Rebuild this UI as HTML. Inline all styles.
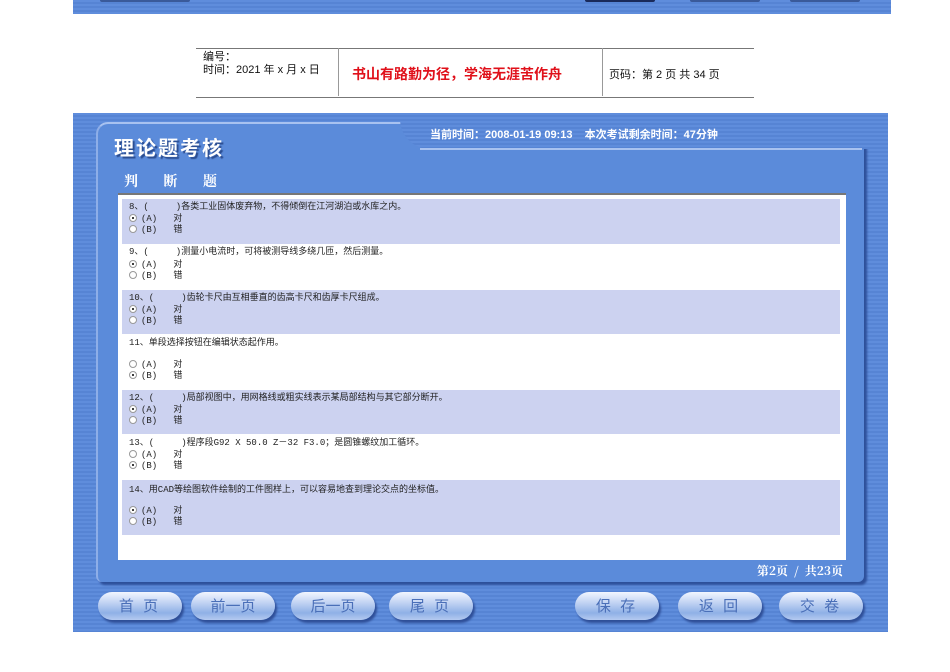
<!DOCTYPE html>
<html><head><meta charset="utf-8"><style>
body{margin:0;width:950px;height:672px;background:#fff;position:relative;overflow:hidden;font-family:"Liberation Sans","Noto Sans CJK SC",sans-serif}
.abs{position:absolute}
.stripe{background:#5a88d8;background-image:repeating-linear-gradient(180deg,#5f8ddc 0 2px,#5684d4 2px 4px)}
.row{position:absolute;left:122px;width:718px;font-family:"Liberation Mono","Noto Sans CJK SC",sans-serif;font-size:9px;color:#222}
.row div{position:absolute;left:7px;white-space:pre;line-height:11px}
.lav{background:#ccd2f0}
.r{display:inline-block;width:6px;height:6px;border:1px solid #999;border-radius:50%;background:#fff;vertical-align:-1px;position:relative;margin-right:4px}
.r.on:after{content:"";position:absolute;left:2px;top:2px;width:2px;height:2px;background:#000;border-radius:50%}
.btn{position:absolute;top:592px;height:28px;width:84px;border-radius:14px;background:linear-gradient(180deg,#f2f6ff 0%,#c6d6f4 35%,#8fb0e6 75%,#b4caf0 100%);box-shadow:2px 3px 2px #2f4f98;color:#4a6fb8;font-size:15px;text-align:center;line-height:28px;letter-spacing:3px;font-family:"Noto Sans CJK SC",sans-serif}
</style></head><body>
<div class="abs stripe" style="left:73px;top:0;width:818px;height:14px"></div>
<div class="abs" style="left:100px;top:0;width:90px;height:2px;background:#3a5a9a;border-radius:0 0 10px 10px"></div>
<div class="abs" style="left:585px;top:0;width:70px;height:2px;background:#1a2a5a;border-radius:0 0 10px 10px"></div>
<div class="abs" style="left:690px;top:0;width:70px;height:2px;background:#3a5a9a;border-radius:0 0 10px 10px"></div>
<div class="abs" style="left:790px;top:0;width:70px;height:2px;background:#3a5a9a;border-radius:0 0 10px 10px"></div>

<div class="abs" style="left:196px;top:48px;width:558px;height:48px;border-top:1px solid #777;border-bottom:1px solid #777"></div>
<div class="abs" style="left:338px;top:48px;width:1px;height:48px;background:#999"></div>
<div class="abs" style="left:602px;top:48px;width:1px;height:48px;background:#999"></div>
<div class="abs" style="left:203px;top:51px;font-size:11px;line-height:13px;color:#111">编号：<br>时间：2021 年 x 月 x 日</div>
<div class="abs" style="left:352px;top:64px;font-size:14px;font-weight:bold;color:#e0101a;font-family:'Noto Sans CJK SC',sans-serif">书山有路勤为径，学海无涯苦作舟</div>
<div class="abs" style="left:609px;top:66px;font-size:11px;color:#111">页码：第 2 页 共 34 页</div>

<div class="abs stripe" style="left:73px;top:113px;width:815px;height:519px"></div>
<div class="abs" style="left:96px;top:122px;width:766px;height:458px;background:#5b8bda;border-radius:12px 6px 6px 6px;box-shadow:3px 3px 2px #2d4f9a;border-top:2px solid #a8c2f0;border-left:2px solid #8eaee8"></div>
<div class="abs stripe" style="left:400px;top:113px;width:470px;height:36px;border-radius:0 0 0 30px"></div>
<div class="abs" style="left:420px;top:148px;width:442px;height:2px;background:#a8c2f0"></div>
<div class="abs" style="left:114px;top:132px;font-size:20px;font-weight:bold;color:#fff;letter-spacing:2px;text-shadow:2px 2px 1px #2a4c90;font-family:'Noto Sans CJK SC',sans-serif">理论题考核</div>
<div class="abs" style="left:124px;top:171px;font-size:14px;font-weight:bold;color:#fff;word-spacing:22px;font-family:'Noto Serif CJK SC',serif">判 断 题</div>
<div class="abs" style="left:430px;top:126px;font-size:11px;font-weight:bold;color:#fff">当前时间：2008-01-19 09:13 &nbsp;&nbsp;&nbsp;本次考试剩余时间：47分钟</div>

<div class="abs" style="left:118px;top:193px;width:728px;height:365px;background:#fff;border-top:2px solid #777"></div>

<div class="row lav" style="top:199px;height:45px"><div style="top:3px">8、(     )各类工业固体废弃物，不得倾倒在江河湖泊或水库之内。</div><div style="top:15px"><span class="r on"></span>(A)   对</div><div style="top:26px"><span class="r"></span>(B)   错</div></div>
<div class="row" style="top:245px;height:44px"><div style="top:2px">9、(     )测量小电流时，可将被测导线多绕几匝，然后测量。</div><div style="top:15px"><span class="r on"></span>(A)   对</div><div style="top:26px"><span class="r"></span>(B)   错</div></div>
<div class="row lav" style="top:290px;height:44px"><div style="top:3px">10、(     )齿轮卡尺由互相垂直的齿高卡尺和齿厚卡尺组成。</div><div style="top:15px"><span class="r on"></span>(A)   对</div><div style="top:26px"><span class="r"></span>(B)   错</div></div>
<div class="row" style="top:335px;height:54px"><div style="top:3px">11、单段选择按钮在编辑状态起作用。</div><div style="top:25px"><span class="r"></span>(A)   对</div><div style="top:36px"><span class="r on"></span>(B)   错</div></div>
<div class="row lav" style="top:390px;height:44px"><div style="top:3px">12、(     )局部视图中，用网格线或粗实线表示某局部结构与其它部分断开。</div><div style="top:15px"><span class="r on"></span>(A)   对</div><div style="top:26px"><span class="r"></span>(B)   错</div></div>
<div class="row" style="top:435px;height:44px"><div style="top:3px">13、(     )程序段G92 X 50.0 Z－32 F3.0；是圆锥螺纹加工循环。</div><div style="top:15px"><span class="r"></span>(A)   对</div><div style="top:26px"><span class="r on"></span>(B)   错</div></div>
<div class="row lav" style="top:480px;height:55px"><div style="top:5px">14、用CAD等绘图软件绘制的工件图样上，可以容易地查到理论交点的坐标值。</div><div style="top:26px"><span class="r on"></span>(A)   对</div><div style="top:37px"><span class="r"></span>(B)   错</div></div>

<div class="abs" style="right:107px;top:562px;font-size:12px;font-weight:bold;color:#fff;font-family:'Noto Serif CJK SC',serif">第2页 &nbsp;/ &nbsp;共23页</div>

<div class="btn" style="left:98px">首 页</div>
<div class="btn" style="left:191px;letter-spacing:0">前一页</div>
<div class="btn" style="left:291px;letter-spacing:0">后一页</div>
<div class="btn" style="left:389px">尾 页</div>
<div class="btn" style="left:575px">保 存</div>
<div class="btn" style="left:678px">返 回</div>
<div class="btn" style="left:779px">交 卷</div>
</body></html>
